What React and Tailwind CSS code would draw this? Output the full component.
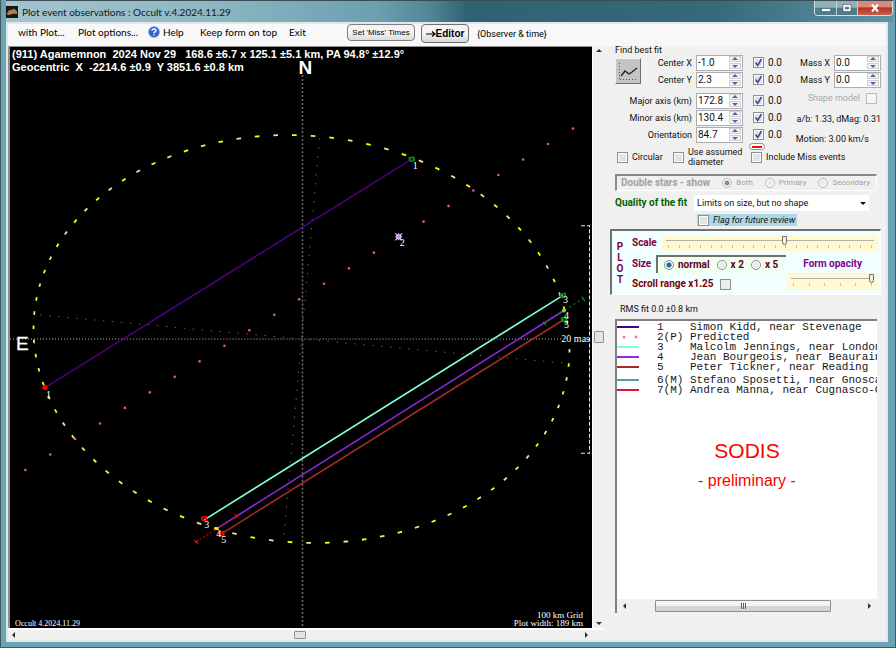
import { useState } from "react";

// chord end points, in plot coordinates
const chords = [
  { id: 1, from: [45, 388], to: [411, 160], color: "#4b0082" },
  { id: 3, from: [204, 520], to: [562, 296], color: "#7fffd4" },
  { id: 4, from: [216, 529], to: [563, 311], color: "#8a2be2" },
  { id: 5, from: [221, 534], to: [563, 320], color: "#a52a2a" },
];

const observers = [
  { no: "1", name: "Simon Kidd, near Stevenage", color: "#4b0082" },
  { no: "2(P)", name: "Predicted", color: "#ff69b4", dots: true },
  { no: "3", name: "Malcolm Jennings, near London", color: "#7fffd4" },
  { no: "4", name: "Jean Bourgeois, near Beauraing", color: "#8a2be2" },
  { no: "5", name: "Peter Tickner, near Reading", color: "#a52a2a" },
];

const missed = [
  { no: "6(M)", name: "Stefano Sposetti, near Gnosca", color: "#5f9ea0" },
  { no: "7(M)", name: "Andrea Manna, near Cugnasco-Gerra", color: "#dc143c" },
];

// fitted ellipse
const CX = 301;
const CY = 339.5;
const MAJOR = 268;
const MINOR = 203;
const TILT = (5.1 * Math.PI) / 180;

function ellipsePoint(deg) {
  const t = (deg * Math.PI) / 180;
  const u = -MAJOR * Math.sin(t);
  const v = -MINOR * Math.cos(t);
  return [
    CX + u * Math.cos(TILT) - v * Math.sin(TILT),
    CY + u * Math.sin(TILT) + v * Math.cos(TILT),
  ];
}

const dashes = Array.from({ length: 90 }, (_, k) => {
  const mid = 1.4 + k * 4;
  return { a: ellipsePoint(mid - 0.5), b: ellipsePoint(mid + 0.5), color: k % 2 ? "#ffff00" : "#f0e68c" };
});

const predicted = Array.from({ length: 23 }, (_, i) => [25.3 + i * 24.85, 470.3 - i * 15.5]);

function Ring({ x, y, color }) {
  return (
    <g stroke={color} fill="none">
      <circle cx={x} cy={y} r="2" strokeWidth="1.5" />
      <path d={`M${x - 3} ${y - 2}l1 4M${x + 2} ${y - 3}l1 5`} />
    </g>
  );
}

function Plot() {
  return (
    <svg viewBox="10 48 581 580" className="block h-full w-full bg-black" preserveAspectRatio="xMidYMid meet">
      {/* grid */}
      <path d="M302 76V628" stroke="#707070" strokeWidth="1.5" strokeDasharray="2 2" />
      <path d="M10 339.5H560" stroke="#c0c0c0" strokeWidth="1" strokeDasharray="1 2" />
      <path d="M40 315.5L568 364" stroke="#8a5510" strokeDasharray="1.5 7.5" />
      <path d="M319 139L283 541" stroke="#8a5510" strokeDasharray="1.5 7.5" />

      {dashes.map((d, i) => (
        <path key={i} d={`M${d.a[0]} ${d.a[1]}L${d.b[0]} ${d.b[1]}`} stroke={d.color} strokeWidth="1.8" />
      ))}
      {predicted.map(([x, y], i) => (
        <circle key={i} cx={x} cy={y} r="1.3" fill="#e0559f" />
      ))}
      {chords.map((c) => (
        <path key={c.id} d={`M${c.from}L${c.to}`} stroke={c.color} strokeWidth="1.6" />
      ))}

      {/* timing uncertainties */}
      <path d="M196 542L236 516" stroke="#e00000" strokeDasharray="2 2" />
      <path d="M194 540l4 4M195 543l3-3M234 514l4 4M235 518l3-4" stroke="#ff0000" />
      <path d="M543 324L582 299" stroke="#228b22" strokeDasharray="2 3" />
      <path d="M581 297l3 5M542 322l3 4M541 324h4" stroke="#228b22" />

      <circle cx="45" cy="388" r="2.5" fill="#ff0000" />
      <Ring x={411} y={160} color="#108a10" />
      <Ring x={204} y={519} color="#ff0000" />
      <Ring x={221} y={534} color="#ff0000" />
      <Ring x={562} y={296} color="#108a10" />
      <Ring x={563} y={320} color="#00a010" />
      <path d="M214 528.5h4" stroke="#ffe600" strokeWidth="2.5" />
      <circle cx="563" cy="311" r="2" fill="#7fe000" />

      {/* predicted centre */}
      <rect x="395.5" y="235" width="5" height="5" fill="#d8a8e8" />
      <path d="M394.5 234l7 7M401.5 234l-7 7M398 234v7M394.5 237.5h7" stroke="#c8d0ff" />
      <circle cx="398" cy="237.5" r="1.2" fill="#ff50b0" />

      {/* scale bracket */}
      <path d="M580 226.5H588.5V453.5H580" fill="none" stroke="#e8e8e8" strokeDasharray="4 2" />

      <g fill="#fff" fontFamily="Liberation Serif, serif" fontSize="10">
        <text x="46" y="398">1</text>
        <text x="412" y="170">1</text>
        <text x="399" y="247">2</text>
        <text x="204" y="528">3</text>
        <text x="216" y="537">4</text>
        <text x="221" y="543">5</text>
        <text x="562" y="304">3</text>
        <text x="563" y="320">4</text>
        <text x="563" y="329">5</text>
        <rect x="561" y="335" width="27" height="9" fill="#000" />
        <text x="589" y="343" textAnchor="end">20 mas</text>
      </g>
      <g fill="#fff" fontFamily="Liberation Serif, serif" fontSize="9">
        <text x="15" y="626" fontSize="8">Occult 4.2024.11.29</text>
        <text x="582" y="618" textAnchor="end">100 km Grid</text>
        <text x="582" y="626" textAnchor="end">Plot width: 189 km</text>
      </g>
      <g fill="#fff" fontFamily="Liberation Sans, sans-serif" fontWeight="bold" fontSize="11">
        <text x="12" y="59">(911) Agamemnon{"\u00a0"} 2024 Nov 29{"\u00a0\u00a0"} 168.6 ±6.7 x 125.1 ±5.1 km, PA 94.8° ±12.9°</text>
        <text x="12" y="72">Geocentric{"\u00a0"} X{"\u00a0"} -2214.6 ±0.9{"\u00a0"} Y 3851.6 ±0.8 km</text>
        <text x="298" y="75" fontSize="19">N</text>
        <text x="16" y="350" fontSize="19" fontWeight="normal" stroke="#fff" strokeWidth="0.3">E</text>
      </g>
    </svg>
  );
}

function Arrow({ dir, className = "" }) {
  const shapes = { up: "M0 4L3 1L6 4Z", down: "M0 2L3 5L6 2Z", left: "M4 0L1 3L4 6Z", right: "M2 0L5 3L2 6Z" };
  return (
    <svg viewBox="0 0 6 6" className={`h-[6px] w-[6px] shrink-0 ${className}`}>
      <path d={shapes[dir]} fill="currentColor" />
    </svg>
  );
}

function Check({ label, checked = false, disabled = false, className = "" }) {
  const [on, setOn] = useState(checked);
  return (
    <label className={`flex items-center gap-1 whitespace-nowrap ${className}`}>
      <span className="relative h-[11px] w-[11px] shrink-0">
        <input
          type="checkbox"
          checked={on}
          disabled={disabled}
          onChange={() => setOn(!on)}
          className="block h-[11px] w-[11px] appearance-none border border-[#8e8f8f] bg-[#e0e3e8] ring-1 ring-white ring-inset disabled:border-[#bcbcbc]"
        />
        {on && (
          <svg viewBox="0 0 11 11" className="pointer-events-none absolute inset-0">
            <path d="M2.5 5.5L4.7 8.5L8.5 2" fill="none" stroke="#3b4f9e" strokeWidth="1.6" />
          </svg>
        )}
      </span>
      {label}
    </label>
  );
}

function Spinner({ id, value }) {
  return (
    <span className="flex h-4 w-[47px] shrink-0 items-center border border-[#abadb3] bg-white p-px">
      <input id={id} type="text" defaultValue={value} className="w-0 min-w-0 flex-1 text-[10px] outline-none" />
      <span className="flex w-3 flex-col gap-px text-[#5064a8]">
        <button type="button" aria-label="Increase" className="flex h-[6px] items-center justify-center border border-[#d0d0d0] bg-[#f2f2f2]">
          <Arrow dir="up" />
        </button>
        <button type="button" aria-label="Decrease" className="flex h-[6px] items-center justify-center border border-[#d0d0d0] bg-[#f2f2f2]">
          <Arrow dir="down" />
        </button>
      </span>
    </span>
  );
}

function FitRow({ id, label, value }) {
  return (
    <div className="flex h-[17px] items-center">
      <label htmlFor={id} className="flex-1 pr-1 text-right whitespace-nowrap">{label}</label>
      <Spinner id={id} value={value} />
      <Check label="0.0" checked className="ml-[10px] w-8 text-[10px]" />
    </div>
  );
}

function Radio({ name, label, checked, disabled }) {
  return (
    <label className="flex items-center gap-1 whitespace-nowrap">
      <input
        type="radio"
        name={name}
        defaultChecked={checked}
        disabled={disabled}
        className="h-[10px] w-[10px] appearance-none rounded-full border border-[#8e8f8f] bg-[#ececec] ring-1 ring-white ring-inset checked:bg-[radial-gradient(circle,#1f6f9c_0_2px,#cfe0ea_3px)] disabled:border-[#b8b8b8] disabled:checked:bg-[radial-gradient(circle,#8a8a8a_0_2px,#f0f0f0_3px)]"
      />
      {label}
    </label>
  );
}

function Slider({ label, value, ticks, className = "" }) {
  return (
    <div className={`bg-[#fff8d0] px-1 ${className}`}>
      <input
        type="range"
        aria-label={label}
        defaultValue={value}
        className="block h-[10px] w-full appearance-none bg-[linear-gradient(#b0b0a8,#b0b0a8)] bg-[length:100%_1px] bg-center bg-no-repeat [&::-webkit-slider-thumb]:h-[9px] [&::-webkit-slider-thumb]:w-[5px] [&::-webkit-slider-thumb]:appearance-none [&::-webkit-slider-thumb]:rounded-b-sm [&::-webkit-slider-thumb]:border [&::-webkit-slider-thumb]:border-[#707070] [&::-webkit-slider-thumb]:bg-[#f0f0f0]"
      />
      <div className="flex justify-between px-[2px]">
        {Array.from({ length: ticks }, (_, i) => (
          <span key={i} className="h-[3px] w-px bg-[#c4c0a8]" />
        ))}
      </div>
    </div>
  );
}

function Observer({ row }) {
  return (
    <li className="flex h-[10px] items-center whitespace-pre">
      <svg viewBox="0 0 22 4" className="h-1 w-[22px] shrink-0">
        {row.dots ? (
          <g fill={row.color}>
            <circle cx="7" cy="2" r="1.5" />
            <circle cx="19" cy="2" r="1.5" />
          </g>
        ) : (
          <path d="M0 2H22" stroke={row.color} strokeWidth="2" />
        )}
      </svg>
      <span className="ml-[18px] w-[33px] shrink-0">{row.no}</span>
      <span>{row.name}</span>
    </li>
  );
}

function TitleBar() {
  return (
    <header className="-mr-[5px] flex h-[22px] items-start justify-between border-t border-[#3c4c54] bg-[linear-gradient(90deg,#a4c4ce_0%,#8fb8c4_22%,#6b9fb0_42%,#4f8596_48%,#2f6273_52%,#356a7b_80%,#5f94a6_100%)]">
      <div className="flex items-center gap-1 pt-1">
        <svg viewBox="0 0 13 13" className="h-3 w-3">
          <rect width="13" height="13" fill="#1c1410" />
          <path d="M1 8L3 5L6 4L9 3L12 6V9L9 8L6 9L2 10Z" fill="#a88058" />
        </svg>
        <h1 className="font-['Lato',sans-serif] text-[10px] leading-[14px] text-[#10181c]">
          Plot event observations : Occult v.4.2024.11.29
        </h1>
      </div>
      <div className="flex h-[15px] overflow-hidden rounded-b border border-t-0 border-[#d0e0e6]">
        <button type="button" aria-label="Minimize" className="flex w-[22px] items-center justify-center border-r border-[#c0d4da] bg-[linear-gradient(#8fb0bb_45%,#4f7c8b_50%)]">
          <svg viewBox="0 0 10 10" className="h-[10px] w-[10px]"><rect x="0.5" y="5.5" width="9" height="3" fill="#fff" stroke="#405058" strokeWidth="0.6" /></svg>
        </button>
        <button type="button" aria-label="Maximize" className="flex w-[21px] items-center justify-center border-r border-[#c0d4da] bg-[linear-gradient(#8fb0bb_45%,#4f7c8b_50%)]">
          <svg viewBox="0 0 10 10" className="h-[10px] w-[10px]"><path d="M1 1.5H9V8.5H1ZM3.5 4V6H6.500V4Z" fill="#fff" fillRule="evenodd" stroke="#405058" strokeWidth="0.6" /></svg>
        </button>
        <button type="button" aria-label="Close" className="flex w-[34px] items-center justify-center bg-[linear-gradient(#d98a78_40%,#b83220_50%,#c8604a)]">
          <svg viewBox="0 0 10 10" className="h-[10px] w-[10px]"><path d="M2 1.5L8 8.5M8 1.5L2 8.5" stroke="#fff" strokeWidth="2.2" /></svg>
        </button>
      </div>
    </header>
  );
}

function MenuBar() {
  return (
    <nav className="flex h-[22px] items-start bg-[#f8f8f8] pl-[10px] font-['Lato',sans-serif] text-[10px] leading-4 text-black">
      <button type="button" className="w-[60px] text-left whitespace-nowrap">with Plot...</button>
      <button type="button" className="w-[70px] text-left whitespace-nowrap">Plot options...</button>
      <button type="button" className="flex w-[52px] items-center gap-[3px]">
        <svg viewBox="0 0 12 12" className="h-3 w-3">
          <circle cx="6" cy="6" r="5.5" fill="#2e62c8" stroke="#9ab4e0" />
          <path d="M4 4.8Q4 3 6 3T8 4.8Q8 6 6 6.4V7.2M6 8.3V9.6" fill="none" stroke="#fff" strokeWidth="1.4" />
        </svg>
        Help
      </button>
      <button type="button" className="w-[89px] text-left whitespace-nowrap">Keep form on top</button>
      <button type="button" className="w-[58px] text-left">Exit</button>
      <button type="button" className="h-[17px] w-[68px] rounded-sm border border-[#808080] bg-[linear-gradient(#f4f4f4_50%,#dcdcdc)] font-['Liberation_Sans',sans-serif] text-[8px] leading-[14px] whitespace-nowrap">Set 'Miss' Times</button>
      <button type="button" className="ml-[6px] flex h-[19px] w-12 items-center justify-center rounded-sm border border-[#707070] bg-[linear-gradient(#f4f4f4_50%,#d8d8d8)] font-['Liberation_Sans',sans-serif] text-[10px] font-bold">
        <svg viewBox="0 0 10 8" className="h-2 w-[10px]"><path d="M0 4H9M6 1.5L9 4L6 6.5" fill="none" stroke="#000" strokeWidth="1.2" /></svg>
        Editor
      </button>
      <span className="ml-2 pt-[2px] font-['Roboto',sans-serif] text-[9px]">{"{Observer & time}"}</span>
    </nav>
  );
}

function FindBestFit() {
  return (
    <section className="mr-[3px] ml-[3px] pr-[2px] pb-[3px] pl-[7px]">
      <h2 className="h-2 leading-2">Find best fit</h2>
      <div className="flex justify-between">
        <div className="w-[170px]">
          <div className="flex">
            <button type="button" aria-label="Find best fit" className="h-[26px] w-[26px] shrink-0 self-center border border-t-[#f4f4f4] border-r-[#707070] border-b-[#707070] border-l-[#f4f4f4] bg-[#c4c4c4]">
              <svg viewBox="0 0 24 24" className="h-6 w-6">
                <path d="M3.5 4V20M4 20.5H22" stroke="#555" strokeDasharray="1 2" fill="none" />
                <path d="M5 17L9 12L13 15L16 13L21 9" stroke="#222" fill="none" strokeWidth="1.3" />
              </svg>
            </button>
            <div className="flex-1">
              <FitRow id="cx" label="Center X" value="-1.0" />
              <FitRow id="cy" label="Center Y" value="2.3" />
            </div>
          </div>
          <div className="mt-1">
            <FitRow id="major" label="Major axis (km)" value="172.8" />
            <FitRow id="minor" label="Minor axis (km)" value="130.4" />
            <FitRow id="orient" label="Orientation" value="84.7" />
          </div>
          <div className="ml-[134px] flex h-[7px] w-4 items-center rounded-sm border border-[#909090] bg-white px-[2px]">
            <span className="h-[2px] w-full bg-[#f01010]" />
          </div>
        </div>
        <div className="flex w-[84px] flex-col items-end">
          <div className="flex h-[17px] items-center gap-1 whitespace-nowrap">
            <label htmlFor="mx">Mass X</label>
            <Spinner id="mx" value="0.0" />
          </div>
          <div className="flex h-[17px] items-center gap-1 whitespace-nowrap">
            <label htmlFor="my">Mass Y</label>
            <Spinner id="my" value="0.0" />
          </div>
          <label className="mt-[2px] mr-1 flex h-4 items-center gap-[6px] whitespace-nowrap text-[#a8a8a8]">
            Shape model
            <input type="checkbox" disabled className="h-[11px] w-[11px] appearance-none border border-[#bcbcbc] bg-[#f6f6f6]" />
          </label>
          <p className="mt-[7px] whitespace-nowrap">a/b: 1.33, dMag: 0.31</p>
          <p className="mt-2 mr-3 whitespace-nowrap">Motion: 3.00 km/s</p>
        </div>
      </div>
      <div className="flex h-[14px] items-center pl-[2px]">
        <Check label="Circular" className="w-14" />
        <Check label={<span className="leading-[10px]">Use assumed<br />diameter</span>} className="w-[78px]" />
        <Check label="Include Miss events" />
      </div>
      <fieldset disabled className="mt-[10px] mr-1 flex h-[17px] items-center gap-3 border-t-2 border-l-2 border-t-[#8a8a8a] border-l-[#8a8a8a] border-r border-b border-r-white border-b-white pl-1 text-[8px] text-[#a0a0a0]">
        <b className="text-[10px] whitespace-nowrap">Double stars - show</b>
        <Radio name="star" label="Both" checked disabled />
        <Radio name="star" label="Primary" disabled />
        <Radio name="star" label="Secondary" disabled />
      </fieldset>
      <div className="mt-1 flex items-center gap-[7px]">
        <label htmlFor="quality" className="text-[10px] font-bold whitespace-nowrap text-[#006400]">Quality of the fit</label>
        <span className="relative flex-1 pr-3">
          <select id="quality" className="block h-4 w-full appearance-none bg-white px-[3px] font-['Roboto',sans-serif] text-[9px] leading-4">
            <option>Limits on size, but no shape</option>
          </select>
          <Arrow dir="down" className="pointer-events-none absolute top-[5px] right-[15px]" />
        </span>
      </div>
      <div className="mt-[3px] ml-[82px] flex h-3 w-[100px] items-center bg-[#add8e6] pl-px">
        <Check label={<em>Flag for future review</em>} />
      </div>
    </section>
  );
}

function PlotControls() {
  return (
    <section className="mx-[5px] flex h-[66px] border-t-2 border-l-2 border-t-[#707070] border-l-[#707070] border-r border-b border-r-white border-b-white bg-[#f0ffff] text-[10px] font-bold text-[#800000]">
      <h2 className="flex w-4 flex-col items-center justify-center leading-[11px] text-[#800040]">
        <span>P</span>
        <span>L</span>
        <span>O</span>
        <span>T</span>
      </h2>
      <div className="flex min-w-0 flex-1 flex-col pt-1 pr-[2px] pl-1">
        <div className="flex items-center gap-1">
          <span className="w-[26px] text-[#800040]">Scale</span>
          <Slider label="Scale" value={57} ticks={20} className="h-4 flex-1" />
        </div>
        <div className="mt-1 flex items-start justify-between">
          <div className="flex items-center">
            <span className="w-[24px] text-[#800040]">Size</span>
            <div className="flex h-[18px] w-[130px] items-center gap-[7px] border-t-2 border-l-2 border-t-[#707070] border-l-[#707070] bg-[#f0fff0] pl-[6px] text-[#600020]">
              <Radio name="size" label="normal" checked />
              <Radio name="size" label="x 2" />
              <Radio name="size" label="x 5" />
            </div>
          </div>
          <span className="mt-[3px] mr-4 whitespace-nowrap text-[#800090]">Form opacity</span>
        </div>
        <div className="flex items-start justify-between">
          <label className="mt-[5px] flex items-center gap-[6px] whitespace-nowrap">
            Scroll range x1.25
            <input type="checkbox" className="h-[11px] w-[11px] appearance-none border border-[#8e8f8f] bg-[#ececec]" />
          </label>
          <Slider label="Form opacity" value={100} ticks={6} className="h-[17px] w-[91px]" />
        </div>
      </div>
    </section>
  );
}

function ObserverList() {
  return (
    <section className="mx-[3px] flex min-h-0 flex-1 flex-col px-[7px] pb-[27px]">
      <p className="mt-[6px] ml-[5px] h-4 leading-4">RMS fit 0.0 ±0.8 km</p>
      <div className="mt-[2px] flex min-h-0 w-[262px] flex-1 flex-col border-t-2 border-l-2 border-t-[#808080] border-l-[#808080] bg-white">
        <ul className="overflow-hidden pt-px font-['Liberation_Mono',monospace] text-[11px] leading-[10px] text-[#181818]">
          {observers.map((o) => <Observer key={o.no} row={o} />)}
        </ul>
        <ul className="mt-[3px] overflow-hidden font-['Liberation_Mono',monospace] text-[11px] leading-[10px] text-[#181818]">
          {missed.map((o) => <Observer key={o.no} row={o} />)}
        </ul>
        <div className="mt-[42px] flex-1 text-center font-['Liberation_Sans',sans-serif] text-[#ff0000]">
          <p className="text-[21px] leading-7">SODIS</p>
          <p className="mt-1 text-base leading-6">- preliminary -</p>
        </div>
        <div className="flex h-[14px] items-center bg-[#f0f0f0] px-[5px] text-[#303030]">
          <Arrow dir="left" />
          <div className="ml-[27px] flex h-3 w-[176px] items-center justify-center gap-px rounded-[1px] border border-[#909090] bg-[linear-gradient(#f4f4f4_45%,#d4d4d4_50%)]">
            <span className="h-[6px] w-px bg-[#606060]" />
            <span className="h-[6px] w-px bg-[#606060]" />
            <span className="h-[6px] w-px bg-[#606060]" />
          </div>
          <Arrow dir="right" className="ml-auto" />
        </div>
      </div>
    </section>
  );
}

export default function App() {
  return (
    <div className="flex h-screen flex-col bg-[#6ba3b5] font-['Roboto',sans-serif] text-[9px] leading-3 text-[#101010]">
      <div className="flex min-h-0 flex-1 flex-col border-r border-b border-l border-[#405860] pr-[7px] pb-[5px] pl-[5px]">
        <TitleBar />
        <div className="flex min-h-0 flex-1 flex-col border-2 border-[#dfe8ea] bg-[#f0f0f0]">
          <MenuBar />
          <div className="flex min-h-0 flex-1">
            <div className="flex min-w-0 flex-1 flex-col">
              <div className="flex min-h-0 flex-1">
                <main className="min-w-0 flex-1 border-t border-l-2 border-[#909090]">
                  <Plot />
                </main>
                <div className="flex w-[13px] flex-col items-center justify-between border-l border-white py-[2px] text-[#303030]">
                  <Arrow dir="up" />
                  <div className="h-3 w-[10px] rounded-[1px] border border-[#909090] bg-[#e4e4e4]" />
                  <Arrow dir="down" />
                </div>
              </div>
              <div className="flex h-[12px] items-center justify-between border-t-2 border-white pr-4 pl-[3px] text-[#303030]">
                <Arrow dir="left" />
                <div className="h-2 w-3 rounded-[1px] border border-[#909090] bg-[#e4e4e4]" />
                <Arrow dir="right" />
              </div>
            </div>
            <aside className="flex w-[281px] shrink-0 flex-col">
              <FindBestFit />
              <PlotControls />
              <ObserverList />
            </aside>
          </div>
        </div>
      </div>
    </div>
  );
}
